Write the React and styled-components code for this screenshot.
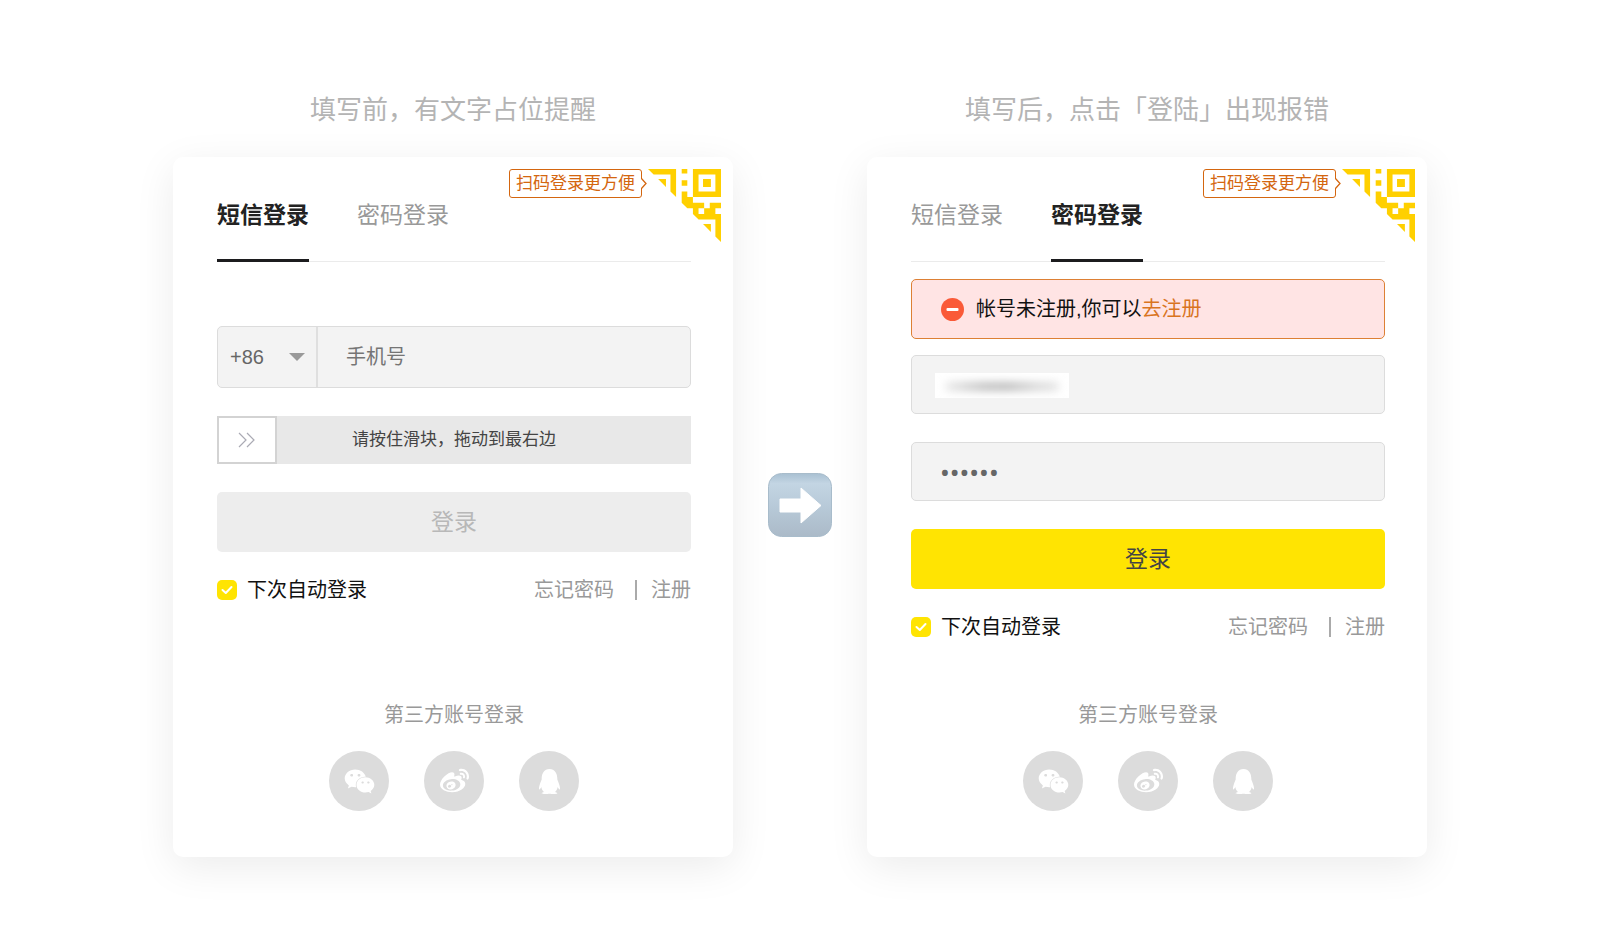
import React from 'react';
import styled, { createGlobalStyle } from 'styled-components';
import { FaWeixin, FaWeibo, FaQq } from 'react-icons/fa';

const GlobalStyle = createGlobalStyle`
  *, *::before, *::after { box-sizing: border-box; }
  body {
    margin: 0;
    background: #fff;
    color: #111;
    font-family: "Liberation Sans", "Noto Sans CJK SC", sans-serif;
    font-size: 20px;
    line-height: 28px;
  }
  button, input, select { font: inherit; color: inherit; margin: 0; }
  a { color: inherit; text-decoration: none; }
`;

const Stage = styled.main`
  display: grid;
  grid-template-columns: minmax(0, 1fr) 134px minmax(0, 1fr);
  max-width: 1254px;
  margin: 0 auto;
  padding: 90px 0 76px;
`;

const Column = styled.section`
  display: flex;
  flex-direction: column;
`;

const Caption = styled.h2`
  margin: 0 0 27px;
  font-size: 26px;
  font-weight: 400;
  line-height: 40px;
  text-align: center;
  color: #b4b4b4;
`;

const Card = styled.div`
  position: relative;
  display: flex;
  flex-direction: column;
  min-height: 700px;
  padding: 0 42px 46px 44px;
  border-radius: 10px;
  background: #fff;
  box-shadow: 0 10px 40px rgba(0, 0, 0, 0.08);
`;

const ScanCorner = styled.a`
  position: absolute;
  top: 12px;
  right: 12px;
  display: flex;
  align-items: flex-start;
  color: #d4660f;
`;

const ScanTag = styled.span`
  height: 29px;
  padding: 0 6px;
  border: 1px solid #d4660f;
  border-radius: 3px;
  font-size: 17px;
  line-height: 27px;
`;

const TagPointer = styled.svg`
  margin: 8px 1px 0 -1px;
`;

const Tabs = styled.nav`
  display: flex;
  gap: 48px;
  box-shadow: inset 0 -1px #ebebeb;
`;

const Tab = styled.button`
  padding: 42px 0 28px;
  border: 0;
  border-bottom: 3px solid ${(p) => (p.$active ? '#1c1c1e' : 'transparent')};
  background: none;
  font-size: 23px;
  font-weight: ${(p) => (p.$active ? 700 : 400)};
  line-height: 32px;
  color: ${(p) => (p.$active ? '#222' : '#999')};
`;

const Form = styled.form`
  display: flex;
  flex-direction: column;
  gap: 28px;
  padding-top: ${(p) => (p.$compact ? 17 : 64)}px;
`;

const Field = styled.div`
  display: flex;
  align-items: center;
  height: ${(p) => (p.$tall ? 62 : 59)}px;
  border: 1px solid #dcdcdc;
  border-radius: 5px;
  background: #f3f3f3;
  overflow: hidden;
`;

const TextInput = styled.input`
  flex: 1;
  min-width: 0;
  height: 100%;
  padding: 0 28px;
  border: 0;
  outline: 0;
  background: none;
  color: #666;
  &::placeholder { color: #757575; opacity: 1; }
`;

const PasswordInput = styled(TextInput)`
  font-family: "Noto Sans", sans-serif;
  font-size: 26px;
`;

const CodePicker = styled.div`
  display: grid;
  align-items: center;
  width: 100px;
  height: 100%;
  border-right: 2px solid #dfdfdf;
  > * { grid-area: 1 / 1; }
  svg { justify-self: end; margin-right: 11px; pointer-events: none; }
`;

const CodeSelect = styled.select`
  width: 100%;
  height: 100%;
  padding: 0 12px;
  border: 0;
  appearance: none;
  background: none;
  color: #666;
`;

const Masked = styled.div`
  display: grid;
  align-items: center;
  width: 134px;
  height: 25px;
  margin: 2px 0 0 23px;
  background: #fff;
  overflow: hidden;
  > * { grid-area: 1 / 1; }
  &::before {
    content: '';
    grid-area: 1 / 1;
    height: 9px;
    margin: 0 10px 2px;
    border-radius: 4px;
    background: linear-gradient(90deg, #eaeaea, #c0c0c0 35%, #bcbcbc 55%, #d8d8d8 80%, #e4e4e4);
    filter: blur(4px);
  }
`;

const MaskedInput = styled.input`
  width: 100%;
  padding: 0;
  border: 0;
  outline: 0;
  background: none;
`;

const SlideCheck = styled.label`
  display: grid;
  align-items: center;
  height: 48px;
  background: #e8e8e8;
  > * { grid-area: 1 / 1; }
  span {
    justify-self: center;
    font-size: 17px;
    color: #444;
    pointer-events: none;
  }
  svg { margin-left: 21px; pointer-events: none; }
`;

const SlideInput = styled.input`
  appearance: none;
  width: 100%;
  height: 48px;
  background: none;
  &::-webkit-slider-thumb {
    appearance: none;
    width: 60px;
    height: 48px;
    border: 2px solid #d3d3d3;
    border-radius: 0;
    background: #fff;
  }
`;

const Submit = styled.button`
  height: 60px;
  border: 0;
  border-radius: 5px;
  background: #ffe402;
  font-size: 23px;
  color: #444;
  &:disabled { background: #ededed; color: #b8b8b8; }
`;

const Alert = styled.div`
  display: flex;
  align-items: center;
  height: 60px;
  margin-bottom: -12px;
  padding-left: 29px;
  border: 1px solid #dd8035;
  border-radius: 5px;
  background: #ffe4e4;
  svg { margin-right: 12px; }
  a { color: #d9741f; }
`;

const Options = styled.div`
  display: flex;
  align-items: center;
  margin-top: -4px;
  color: #999;
`;

const Remember = styled.label`
  display: grid;
  grid-template-columns: 20px auto;
  align-items: center;
  column-gap: 10px;
  margin-right: auto;
  color: #111;
  svg { grid-area: 1 / 1; justify-self: center; pointer-events: none; }
`;

const CheckBox = styled.input`
  grid-area: 1 / 1;
  appearance: none;
  width: 20px;
  height: 20px;
  border-radius: 5px;
  background: #ffe402;
`;

const Divider = styled.span`
  width: 2px;
  height: 20px;
  margin: 0 14px 0 21px;
  background: #aaa;
`;

const ThirdParty = styled.section`
  display: flex;
  flex-direction: column;
  gap: 22px;
  margin-top: auto;
  text-align: center;
  color: #999;
`;

const SocialList = styled.div`
  display: flex;
  justify-content: center;
  gap: 35px;
`;

const SocialButton = styled.button`
  display: flex;
  align-items: center;
  justify-content: center;
  width: 60px;
  height: 60px;
  padding: 0;
  border: 0;
  border-radius: 50%;
  background: #dcdcdc;
  color: #fff;
`;

const StepArrow = styled.svg`
  align-self: end;
  justify-self: center;
  margin-bottom: 320px;
`;

function QrCorner() {
  return (
    <svg width="73" height="73" viewBox="0 0 13 13" fill="#ffd000" fillRule="evenodd" aria-hidden="true">
      <path d="M0 0H5V5L4 4V1H1Z M1.8 1.8H3.2V3.2Z" />
      <path d="M6 0H7V.8H6Z M6 2H7V3H6Z" />
      <path d="M8 0H13V5H8Z M9 1V4H12V1Z M9.8 1.8H11.2V3.2H9.8Z" />
      <path d="M6 4H7V5H8V6H10V7H11V6H13V7H12V8H13V13L12 12V9H9L8 8V7H7L6 6Z M9 7V8H10V7Z" />
      <path d="M9.8 9.8H11.2V11.2Z" />
    </svg>
  );
}

function LoginCard({ mode, children }) {
  return (
    <Card>
      <ScanCorner href="#scan">
        <ScanTag>扫码登录更方便</ScanTag>
        <TagPointer width="6" height="13" viewBox="0 0 6 13" aria-hidden="true">
          <path d="M0 1L5 6.500L0 12" fill="#fff" stroke="currentColor" strokeWidth="1.300" />
        </TagPointer>
        <QrCorner />
      </ScanCorner>
      <Tabs>
        <Tab type="button" $active={mode === 'sms'}>短信登录</Tab>
        <Tab type="button" $active={mode === 'password'}>密码登录</Tab>
      </Tabs>
      <Form $compact={mode === 'password'} onSubmit={(e) => e.preventDefault()}>
        {children}
        <Options>
          <Remember>
            <CheckBox type="checkbox" defaultChecked />
            <svg width="12" height="10" viewBox="0 0 12 10" fill="none" stroke="#fff" strokeWidth="2" strokeLinecap="round" strokeLinejoin="round" aria-hidden="true">
              <path d="M1.500 5L4.800 8L10.500 2" />
            </svg>
            下次自动登录
          </Remember>
          <a href="#forgot">忘记密码</a>
          <Divider />
          <a href="#register">注册</a>
        </Options>
      </Form>
      <ThirdParty>
        第三方账号登录
        <SocialList>
          <SocialButton type="button" aria-label="微信"><FaWeixin size={31} /></SocialButton>
          <SocialButton type="button" aria-label="微博"><FaWeibo size={29} /></SocialButton>
          <SocialButton type="button" aria-label="QQ"><FaQq size={25} /></SocialButton>
        </SocialList>
      </ThirdParty>
    </Card>
  );
}

export default function App() {
  return (
    <>
      <GlobalStyle />
      <Stage>
        <Column>
          <Caption>填写前，有文字占位提醒</Caption>
          <LoginCard mode="sms">
            <Field $tall>
              <CodePicker>
                <CodeSelect aria-label="国家区号" defaultValue="+86">
                  <option>+86</option>
                </CodeSelect>
                <svg width="16" height="8" viewBox="0 0 16 8" aria-hidden="true">
                  <path d="M0 0H16L8 8Z" fill="#999" />
                </svg>
              </CodePicker>
              <TextInput type="tel" placeholder="手机号" aria-label="手机号" />
            </Field>
            <SlideCheck>
              <SlideInput type="range" min="0" max="100" defaultValue="0" />
              <span>请按住滑块，拖动到最右边</span>
              <svg width="18" height="16" viewBox="0 0 18 16" fill="none" stroke="#aaaab4" strokeWidth="1.200" aria-hidden="true">
                <path d="M1 1L8 8L1 15M9 1L16 8L9 15" />
              </svg>
            </SlideCheck>
            <Submit disabled>登录</Submit>
          </LoginCard>
        </Column>

        <StepArrow width="64" height="64" viewBox="0 0 64 64" role="img" aria-label="下一步">
          <defs>
            <linearGradient id="arrowFace" x1="0" y1="0" x2="0" y2="1">
              <stop offset="0" stopColor="#a9c0d2" />
              <stop offset=".16" stopColor="#c3d5e3" />
              <stop offset=".5" stopColor="#b8cad9" />
              <stop offset="1" stopColor="#abbac8" />
            </linearGradient>
          </defs>
          <rect x=".5" y=".5" width="63" height="63" rx="13" fill="url(#arrowFace)" stroke="#a8bccb" />
          <path d="M12 26H33V15L53 32.500L33 50V39H12Z" fill="#fff" stroke="#fff" strokeLinejoin="round" />
        </StepArrow>

        <Column>
          <Caption>填写后，点击「登陆」出现报错</Caption>
          <LoginCard mode="password">
            <Alert role="alert">
              <svg width="23" height="23" viewBox="0 0 23 23" aria-hidden="true">
                <circle cx="11.500" cy="11.500" r="11.500" fill="#fa5a38" />
                <rect x="5.500" y="10" width="12" height="3" rx="1" fill="#fff" />
              </svg>
              <span>帐号未注册,你可以<a href="#register">去注册</a></span>
            </Alert>
            <Field>
              <Masked>
                <MaskedInput type="text" aria-label="帐号" />
              </Masked>
            </Field>
            <Field>
              <PasswordInput type="password" defaultValue="123456" aria-label="密码" />
            </Field>
            <Submit>登录</Submit>
          </LoginCard>
        </Column>
      </Stage>
    </>
  );
}
